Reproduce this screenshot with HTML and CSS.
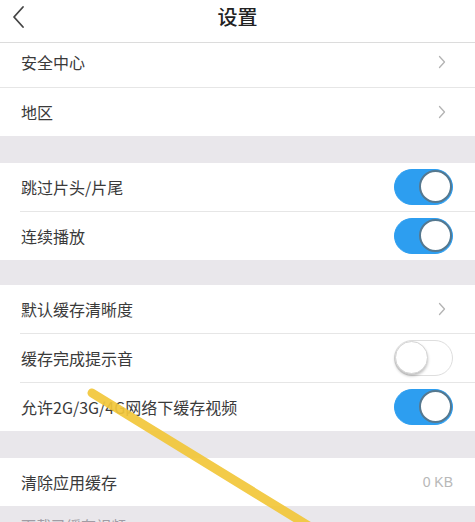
FILE: index.html
```html
<!DOCTYPE html>
<html lang="zh">
<head>
<meta charset="utf-8">
<title>设置</title>
<link rel="stylesheet" href="styles.css">
</head>
<body>
<div class="page">
  <header class="header">
    <svg class="back" width="16" height="24" viewBox="0 0 16 24"><polyline points="12,2 3,12 12,22" fill="none" stroke="#444" stroke-width="1.8" stroke-linecap="round" stroke-linejoin="round"/></svg>
    <h1 class="title">设置</h1>
  </header>

  <section class="group">
    <div class="row row-short full"><span class="label">安全中心</span><svg class="chev" width="8" height="14" viewBox="0 0 8 14"><polyline points="1.5,1.5 6.5,7 1.5,12.5" fill="none" stroke="#b3b3b3" stroke-width="1.3" stroke-linecap="round" stroke-linejoin="round"/></svg></div>
    <div class="row"><span class="label">地区</span><svg class="chev" width="8" height="14" viewBox="0 0 8 14"><polyline points="1.5,1.5 6.5,7 1.5,12.5" fill="none" stroke="#b3b3b3" stroke-width="1.3" stroke-linecap="round" stroke-linejoin="round"/></svg></div>
  </section>
  <div class="band"></div>

  <section class="group">
    <div class="row"><span class="label">跳过片头/片尾</span><span class="switch on"><span class="knob"></span></span></div>
    <div class="row"><span class="label">连续播放</span><span class="switch on"><span class="knob"></span></span></div>
  </section>
  <div class="band band-s"></div>

  <section class="group">
    <div class="row"><span class="label">默认缓存清晰度</span><svg class="chev" width="8" height="14" viewBox="0 0 8 14"><polyline points="1.5,1.5 6.5,7 1.5,12.5" fill="none" stroke="#b3b3b3" stroke-width="1.3" stroke-linecap="round" stroke-linejoin="round"/></svg></div>
    <div class="row"><span class="label">缓存完成提示音</span><span class="switch"><span class="knob"></span></span></div>
    <div class="row"><span class="label">允许2G/3G/4G网络下缓存视频</span><span class="switch on"><span class="knob"></span></span></div>
  </section>
  <div class="band"></div>

  <section class="group">
    <div class="row"><span class="label">清除应用缓存</span><span class="value">0 KB</span></div>
  </section>
  <div class="band band-text"><span class="note">下载已缓存视频</span></div>

  <svg class="mark" width="475" height="522" viewBox="0 0 475 522"><line x1="92" y1="393" x2="312" y2="528" stroke="#f2c73a" stroke-width="9" stroke-linecap="round" opacity="0.92"/></svg>
</div>
</body>
</html>
```
FILE: styles.css
```css
* { box-sizing: border-box; margin: 0; padding: 0; }
html, body { width: 475px; height: 522px; overflow: hidden; background: #fff; }
body { font-family: "Noto Sans CJK SC", "Noto Sans", sans-serif; color: #333; }
.page { position: relative; width: 475px; height: 522px; overflow: hidden; }
.header { height: 43px; border-bottom: 1px solid #dcdcdc; display: flex; align-items: center; justify-content: center; position: relative; }
.back { position: absolute; left: 11px; top: 5px; }
.title { font-size: 20px; font-weight: 500; color: #222; line-height: 1; margin-top: -8px; }
.group { background: #fff; }
.row { height: 49px; margin-left: 20px; padding-right: 22px; display: flex; align-items: center; justify-content: space-between; border-bottom: 1px solid #e6e6e6; }
.row.full { margin-left: 0; padding-left: 20px; }
.row:last-child { border-bottom: none; height: 48px; }
.row-short { height: 45px; padding-bottom: 7px; }
.label { font-size: 16px; color: #3a3a3a; padding-left: 1px; }
.chev { margin-right: 7px; display: block; }
.value { font-size: 14px; color: #b8b8b8; font-family: "Liberation Sans", sans-serif; }
.switch { width: 59px; height: 36px; border-radius: 18px; border: 1.5px solid #dedede; background: #fff; position: relative; display: block; }
.switch .knob { position: absolute; top: 0; left: 0; width: 33px; height: 33px; border-radius: 50%; background: #fff; box-shadow: 0 2px 3px rgba(0,0,0,0.25); border: 1px solid #d4d4d4; }
.switch.on { background: #2d9ef0; border-color: #2d9ef0; }
.switch.on .knob { left: auto; right: 0; border: 2px solid #55788f; box-shadow: none; }
.band { height: 27px; background: #e9e7eb; }
.band-s { height: 25px; }
.band-text { height: 40px; padding: 7px 0 0 21px; }
.note { font-size: 15px; color: #a09ca4; }
.mark { position: absolute; left: 0; top: 0; pointer-events: none; }
```
